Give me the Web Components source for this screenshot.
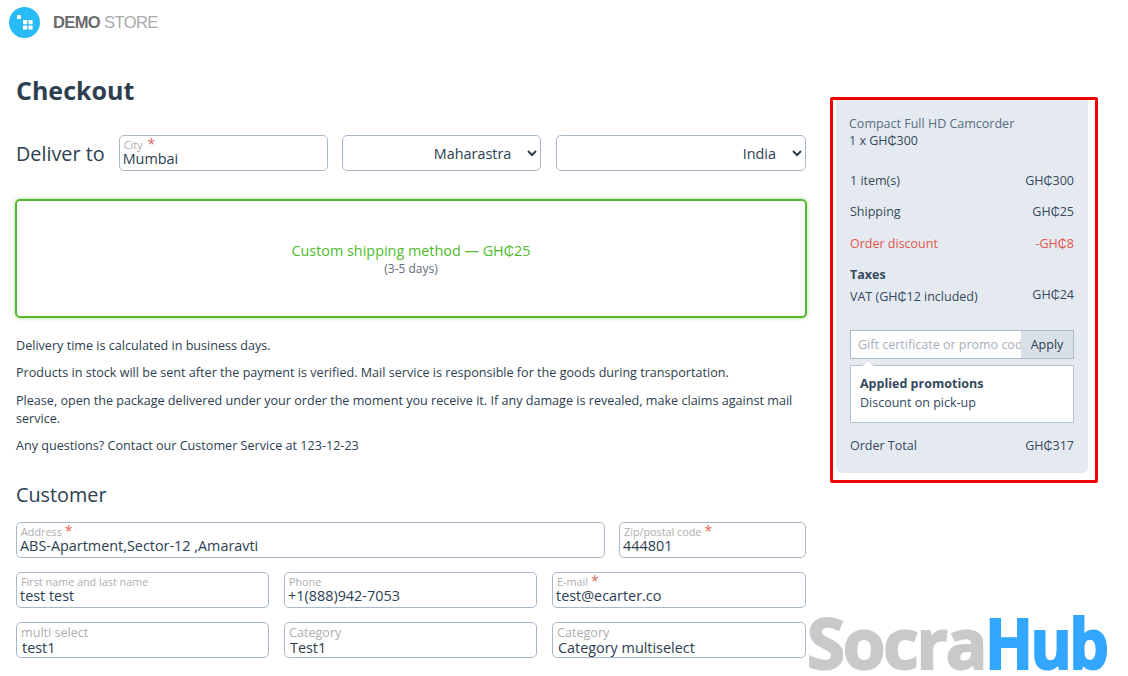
<!DOCTYPE html>
<html lang="en">
<head>
<meta charset="utf-8">
<title>Checkout</title>
<style>
    html, body { margin: 0; background: #fff; overflow: hidden; }
    body { font-family: "Open Sans", sans-serif; color: #2c3e50; height: 676px; position: relative; }
</style>
</head>
<body>
<store-header></store-header>
<checkout-page>
    <h-title slot="title">Checkout</h-title>
    <deliver-row slot="deliver"></deliver-row>
    <shipping-card slot="shipping" method="Custom shipping method — GH₵25" time="(3-5 days)"></shipping-card>
    <delivery-notes slot="notes"></delivery-notes>
    <customer-form slot="customer"></customer-form>
    <order-summary slot="summary"></order-summary>
</checkout-page>
<socra-mark></socra-mark>

<script>
class StoreHeader extends HTMLElement {
    constructor() {
        super();
        this.attachShadow({ mode: 'open' });
        this.shadowRoot.innerHTML = `
            <style>
                :host { display: flex; align-items: center; gap: 13px; height: 31px; padding: 7px 0 0 9px; }
                .name { font: 16.5px/1 "Liberation Sans", sans-serif; letter-spacing: -0.6px; color: #aaa; }
                b { color: #6b6b6b; }
            </style>
            <svg width="31" height="31" viewBox="0 0 31 31">
                <circle cx="15.5" cy="15.5" r="15.5" fill="#29bbf6"/>
                <rect x="8" y="8" width="4" height="4" rx=".6" fill="#fff"/>
                <rect x="14" y="13" width="4.2" height="4.2" rx=".6" fill="#fff"/>
                <rect x="19.4" y="13" width="4.2" height="4.2" rx=".6" fill="#fff"/>
                <rect x="14" y="18.4" width="4.2" height="4.2" rx=".6" fill="#fff"/>
                <rect x="19.4" y="18.4" width="4.2" height="4.2" rx=".6" fill="#fff"/>
            </svg>
            <span class="name"><b>DEMO</b> STORE</span>
        `;
    }
}

class CheckoutPage extends HTMLElement {
    constructor() {
        super();
        this.attachShadow({ mode: 'open' });
        this.shadowRoot.innerHTML = `
            <style>
                :host { display: grid; grid-template-columns: 790px 268px; column-gap: 24px; padding-left: 16px; }
                .main { display: flex; flex-direction: column; }
                .side { padding-top: 59px; }
            </style>
            <div class="main">
                <slot name="title"></slot>
                <slot name="deliver"></slot>
                <slot name="shipping"></slot>
                <slot name="notes"></slot>
                <slot name="customer"></slot>
            </div>
            <div class="side"><slot name="summary"></slot></div>
        `;
    }
}

class HTitle extends HTMLElement {
    constructor() {
        super();
        this.attachShadow({ mode: 'open' });
        this.shadowRoot.innerHTML = `
            <style>
                :host { display: block; margin-top: 34px; margin-bottom: 1px; font-size: 25px; line-height: 36px; font-weight: 700; color: #2c3e50; }
            </style>
            <slot></slot>
        `;
    }
}

class UiField extends HTMLElement {
    constructor() {
        super();
        this.attachShadow({ mode: 'open' });
    }

    connectedCallback() {
        const label = this.getAttribute('label') || '';
        const star = this.hasAttribute('required') ? '<i>*</i>' : '';
        this.shadowRoot.innerHTML = `
            <style>
                :host { display: block; box-sizing: border-box; height: 36px; border: 1px solid #a9b8c6; border-radius: 5px; padding: 2px 3px 0; overflow: hidden; background: #fff; }
                .label { display: block; height: 13px; font-size: 10.8px; line-height: 13px; color: #aeaeae; padding-left: 1px; white-space: nowrap; }
                i { font-style: normal; color: #e0685a; font-size: 14px; line-height: 10px; margin-left: var(--star-gap, 3px); }
                .value { display: block; margin-top: -1px; font-size: 14.4px; line-height: 18px; color: #2c3e50; white-space: nowrap; }
                :host([big]) .label { font-size: 12.6px; line-height: 14px; height: 13px; margin-top: 1px; }
                :host([big]) .value { padding-left: 2px; margin-top: 0; }
            </style>
            <span class="label">${label}${star}</span>
            <span class="value"><slot></slot></span>
        `;
    }
}

class UiSelect extends HTMLElement {
    constructor() {
        super();
        this.attachShadow({ mode: 'open' });
    }

    connectedCallback() {
        const value = this.getAttribute('value') || '';
        this.shadowRoot.innerHTML = `
            <style>
                :host { display: block; height: 36px; }
                select { box-sizing: border-box; width: 100%; height: 36px; border: 1px solid #a9b8c6; border-radius: 5px; background: #fff; color: #2c3e50; font: 14.4px "Open Sans", sans-serif; text-align: right; padding: 0 13px 0 4px; }
            </style>
            <select><option>${value}</option></select>
        `;
    }
}

class DeliverRow extends HTMLElement {
    constructor() {
        super();
        this.attachShadow({ mode: 'open' });
        this.shadowRoot.innerHTML = `
            <style>
                :host { display: grid; grid-template-columns: 88px 209px 199px 250px; column-gap: 14.67px; align-items: center; margin-top: 26px; }
                span { font-size: 19.8px; white-space: nowrap; }
                ui-field { --star-gap: 5px; }
            </style>
            <span>Deliver to</span>
            <ui-field label="City" required>Mumbai</ui-field>
            <ui-select value="Maharastra"></ui-select>
            <ui-select value="India"></ui-select>
        `;
    }
}

class ShippingCard extends HTMLElement {
    constructor() {
        super();
        this.attachShadow({ mode: 'open' });
    }

    connectedCallback() {
        this.shadowRoot.innerHTML = `
            <style>
                :host { display: flex; flex-direction: column; align-items: center; justify-content: center; box-sizing: border-box; height: 119px; margin: 28px -1px 0; padding-top: 1px; border: 2px solid #56b535; border-radius: 5px; box-shadow: 0 0 4px #a5e08f; }
                .m { font-size: 14.4px; line-height: 18px; margin-bottom: 1px; color: #4fbb2c; }
                .t { font-size: 12px; line-height: 16px; color: #5d6d7c; }
            </style>
            <span class="m">${this.getAttribute('method')}</span>
            <span class="t">${this.getAttribute('time')}</span>
        `;
    }
}

class DeliveryNotes extends HTMLElement {
    constructor() {
        super();
        this.attachShadow({ mode: 'open' });
        this.shadowRoot.innerHTML = `
            <style>
                :host { display: flex; flex-direction: column; gap: 9.3px; margin-top: 19px; font-size: 12.6px; line-height: 18px; color: #2c3e50; }
                p { margin: 0; }
            </style>
            <p>Delivery time is calculated in business days.</p>
            <p>Products in stock will be sent after the payment is verified. Mail service is responsible for the goods during transportation.</p>
            <p>Please, open the package delivered under your order the moment you receive it. If any damage is revealed, make claims against mail service.</p>
            <p>Any questions? Contact our Customer Service at 123-12-23</p>
        `;
    }
}

class CustomerForm extends HTMLElement {
    constructor() {
        super();
        this.attachShadow({ mode: 'open' });
        this.shadowRoot.innerHTML = `
            <style>
                :host { display: block; margin-top: 26.1px; }
                h2 { margin: 0 0 13px; font-size: 19.8px; line-height: 28px; font-weight: 400; }
                .rows { display: flex; flex-direction: column; gap: 14px; }
                .two { display: grid; grid-template-columns: 589px 187px; column-gap: 14px; }
                .three { display: grid; grid-template-columns: 253px 253px 254px; column-gap: 15px; }
            </style>
            <h2>Customer</h2>
            <div class="rows">
                <div class="two">
                    <ui-field label="Address" required>ABS-Apartment,Sector-12 ,Amaravti</ui-field>
                    <ui-field label="Zip/postal code" required>444801</ui-field>
                </div>
                <div class="three">
                    <ui-field label="First name and last name">test test</ui-field>
                    <ui-field label="Phone">+1(888)942-7053</ui-field>
                    <ui-field label="E-mail" required>test@ecarter.co</ui-field>
                </div>
                <div class="three">
                    <ui-field big label="multi select">test1</ui-field>
                    <ui-field big label="Category">Test1</ui-field>
                    <ui-field big label="Category">Category multiselect</ui-field>
                </div>
            </div>
        `;
    }
}

class SumLine extends HTMLElement {
    constructor() {
        super();
        this.attachShadow({ mode: 'open' });
    }

    connectedCallback() {
        this.shadowRoot.innerHTML = `
            <style>
                :host { display: flex; justify-content: space-between; font-size: 12.5px; line-height: 18px; color: #34495e; }
                :host([danger]) { color: #e0564a; }
                .amount { margin-top: var(--amount-shift, 0); }
            </style>
            <span><slot></slot></span>
            <span class="amount">${this.getAttribute('amount')}</span>
        `;
    }
}

class OrderSummary extends HTMLElement {
    constructor() {
        super();
        this.attachShadow({ mode: 'open' });
        this.shadowRoot.innerHTML = `
            <style>
                :host { display: block; box-sizing: border-box; width: 268px; height: 386px; border: 3px solid #f00000; border-radius: 2px; padding: 0 7px 7px 3px; }
                .panel { box-sizing: border-box; height: 373px; background: #e5e9f0; border-radius: 0 0 6px 6px; padding: 15px 14px 0; }
                .item { font-size: 12.5px; line-height: 17px; color: #34495e; margin-left: -1px; }
                .item span { display: block; color: #566d82; }
                .lines { display: flex; flex-direction: column; margin-top: 23px; gap: 13.4px; }
                .taxes { font-size: 12.5px; line-height: 18px; font-weight: 700; color: #34495e; margin-top: 13.2px; }
                .vat { margin-top: 4px; --amount-shift: -2px; }
                .promo { display: flex; height: 29px; box-sizing: border-box; margin-top: 24px; border: 1px solid #acbac8; background: #fff; }
                .promo .ph { flex: 1; overflow: hidden; white-space: nowrap; font-size: 12.5px; line-height: 27px; padding-left: 7px; color: #a3aebb; }
                .promo .btn { flex: 0 0 52px; text-align: center; font-size: 12.5px; line-height: 27px; color: #2c3e50; background: #d9e0e8; }
                .pop { position: relative; box-sizing: border-box; height: 58px; margin-top: 6px; padding: 8px 9px; background: #fff; border: 1px solid #b6c2ce; font-size: 12.5px; line-height: 19px; color: #34495e; }
                .pop::before { content: ""; position: absolute; left: 13px; top: -5px; width: 8px; height: 8px; background: #fff; border-left: 1px solid #d5dce4; border-top: 1px solid #d5dce4; box-sizing: border-box; transform: rotate(45deg); }
                .pop b { display: block; }
                .total { margin-top: 14px; }
            </style>
            <div class="panel">
                <div class="item"><span>Compact Full HD Camcorder</span>1 x GH₵300</div>
                <div class="lines">
                    <sum-line amount="GH₵300">1 item(s)</sum-line>
                    <sum-line amount="GH₵25">Shipping</sum-line>
                    <sum-line danger amount="-GH₵8">Order discount</sum-line>
                </div>
                <div class="taxes">Taxes</div>
                <sum-line class="vat" amount="GH₵24">VAT (GH₵12 included)</sum-line>
                <div class="promo"><div class="ph">Gift certificate or promo code</div><div class="btn">Apply</div></div>
                <div class="pop"><b>Applied promotions</b>Discount on pick-up</div>
                <sum-line class="total" amount="GH₵317">Order Total</sum-line>
            </div>
        `;
    }
}

class SocraMark extends HTMLElement {
    constructor() {
        super();
        this.attachShadow({ mode: 'open' });
        this.shadowRoot.innerHTML = `
            <style>
                :host { position: absolute; left: 807px; top: 596px; font: 700 69px/92px "Open Sans", sans-serif; letter-spacing: -2.2px; color: #c9c9c9; white-space: nowrap; -webkit-text-stroke: 2px #c9c9c9; }
                span { display: inline-block; transform: scaleX(.91); transform-origin: left center; letter-spacing: -2.8px; color: #33a6ff; -webkit-text-stroke: 2px #33a6ff; }
            </style>
            Socra<span>Hub</span>
        `;
    }
}

customElements.define('store-header', StoreHeader);
customElements.define('checkout-page', CheckoutPage);
customElements.define('h-title', HTitle);
customElements.define('ui-field', UiField);
customElements.define('ui-select', UiSelect);
customElements.define('deliver-row', DeliverRow);
customElements.define('shipping-card', ShippingCard);
customElements.define('delivery-notes', DeliveryNotes);
customElements.define('customer-form', CustomerForm);
customElements.define('sum-line', SumLine);
customElements.define('order-summary', OrderSummary);
customElements.define('socra-mark', SocraMark);
</script>
</body>
</html>
